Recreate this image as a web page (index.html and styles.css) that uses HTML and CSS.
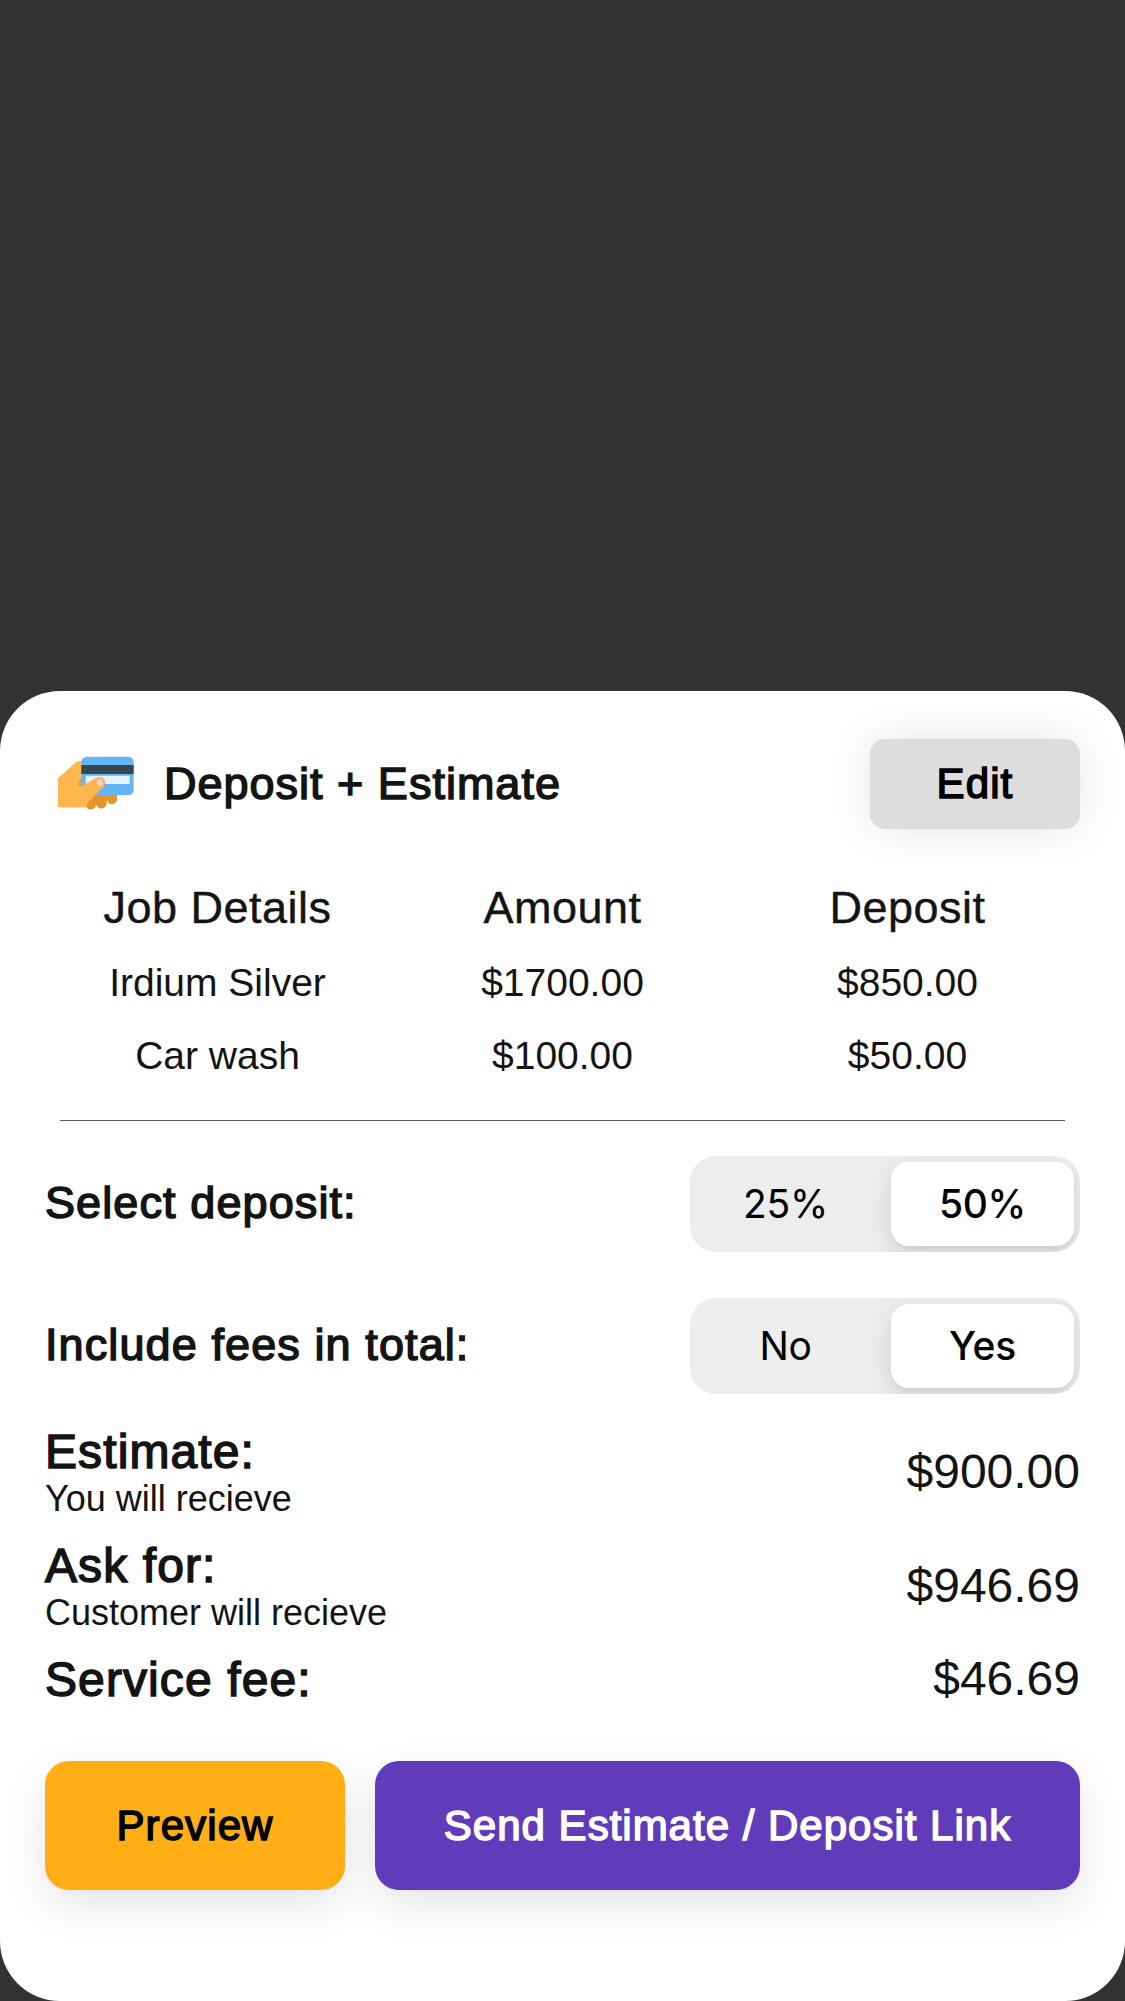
FILE: index.html
```html
<!DOCTYPE html>
<html lang="en">
<head>
<meta charset="utf-8">
<title>Deposit + Estimate</title>
<link rel="stylesheet" href="styles.css">
</head>
<body>
<main class="sheet">
  <header class="header">
    <svg class="icon" viewBox="54 48 228 162" aria-hidden="true">
      <path fill="#e8932b" d="M136 164H231V175A15 15 0 0 1 201 180L200 187A16 16 0 0 1 168 192A15 15 0 0 1 137 194Z"/>
      <path fill="#ffb74d" d="M54 115L108 67Q113 63 124 63H142V202H54Z"/>
      <path fill="#e8932b" d="M124 110V137H114Z"/>
      <rect x="124" y="50" width="157" height="115" rx="16" fill="#64b5f6"/>
      <path fill="#37474f" d="M124 75H281V102H124Z"/>
      <path fill="#e3f2fd" d="M137 107H269V132H137Z"/>
      <path fill="#ffb74d" d="M110 137H127L166 115Q184 106 193 118Q200 129 190 142L142 188Q128 202 108 202H80V150Z"/>
      <ellipse cx="180" cy="128" rx="9" ry="11" transform="rotate(-38 180 128)" fill="#ffcdd2"/>
    </svg>
    <h1 class="title">Deposit + Estimate</h1>
    <button class="button button-edit">Edit</button>
  </header>

  <section class="jobs">
    <div class="jobs-row jobs-head"><span>Job Details</span><span>Amount</span><span>Deposit</span></div>
    <div class="jobs-row"><span>Irdium Silver</span><span>$1700.00</span><span>$850.00</span></div>
    <div class="jobs-row"><span>Car wash</span><span>$100.00</span><span>$50.00</span></div>
  </section>
  <hr class="rule">

  <section class="options">
    <div class="option">
      <span class="option-label">Select deposit:</span>
      <div class="toggle"><span class="choice">25%</span><span class="choice choice-on">50%</span></div>
    </div>
    <div class="option">
      <span class="option-label">Include fees in total:</span>
      <div class="toggle"><span class="choice">No</span><span class="choice choice-on">Yes</span></div>
    </div>
  </section>

  <section class="totals">
    <div class="total">
      <div><div class="total-label">Estimate:</div><div class="total-note">You will recieve</div></div>
      <span class="total-value">$900.00</span>
    </div>
    <div class="total">
      <div><div class="total-label">Ask for:</div><div class="total-note">Customer will recieve</div></div>
      <span class="total-value">$946.69</span>
    </div>
    <div class="total">
      <div class="total-label">Service fee:</div>
      <span class="total-value">$46.69</span>
    </div>
  </section>

  <footer class="actions">
    <button class="button button-preview">Preview</button>
    <button class="button button-send">Send Estimate / Deposit Link</button>
  </footer>
</main>
</body>
</html>
```
FILE: styles.css
```css
* { box-sizing: border-box; }

body {
  margin: 0;
  min-height: 2001px;
  display: flex;
  flex-direction: column;
  justify-content: flex-end;
  background: #323232;
  color: #141414;
  font-family: "Liberation Sans", Arial, sans-serif;
}

.sheet {
  height: 1310px;
  padding: 48px 45px 0;
  overflow: hidden;
  border-radius: 60px;
  background: #fff;
}

/* Semi-bold: the regular cut thickened by a thin outline */
.title,
.button,
.option-label,
.total-label {
  font-weight: 400;
  letter-spacing: 1.1px;
  -webkit-text-stroke: 1.5px currentColor;
}

.header {
  display: flex;
  align-items: center;
  height: 90px;
  padding-left: 13px;
}
.icon {
  width: 76px;
  height: 54px;
  margin-bottom: 2px;
}
.title {
  flex: 1;
  margin: 0 0 0 30px;
  font-size: 45px;
  line-height: 60px;
  letter-spacing: 1px;
}

.button {
  border: 0;
  padding: 0;
  font-family: "Liberation Sans", Arial, sans-serif;
  font-size: 42px;
  line-height: 1;
  white-space: nowrap;
}
.button-edit {
  width: 210px;
  height: 90px;
  border-radius: 15px;
  background: #ddd;
  color: #000;
  box-shadow: 0 0 45px rgba(0, 0, 0, 0.11);
}

.jobs { margin-top: 49px; }
.jobs-row {
  display: grid;
  grid-template-columns: repeat(3, 1fr);
  text-align: center;
  font-size: 39px;
  line-height: 73px;
}
.jobs-head {
  margin-bottom: 8px;
  font-size: 45px;
  line-height: 60px;
  letter-spacing: 0.5px;
  -webkit-text-stroke: 0.4px currentColor;
}
.rule {
  height: 1px;
  margin: 28px 15px 35px;
  border: 0;
  background: #555;
}

.options { display: grid; gap: 46px; }
.option {
  display: flex;
  align-items: center;
  justify-content: space-between;
}
.option-label {
  padding-bottom: 3px;
  font-size: 45px;
}
.toggle {
  display: grid;
  grid-template-columns: 179px 183px;
  column-gap: 16px;
  width: 390px;
  height: 96px;
  padding: 6px;
  overflow: hidden;
  border-radius: 26px;
  background: #ededed;
  color: #000;
  font: 39px/84px Inter, sans-serif;
  letter-spacing: -0.3px;
  text-align: center;
}
.choice-on {
  border-radius: 18px;
  background: #fff;
  font-weight: 500;
  box-shadow: 0 9px 24px rgba(0, 0, 0, 0.12), 0 3px 3px rgba(0, 0, 0, 0.04);
}

.totals {
  display: grid;
  gap: 18px;
  margin-top: 30px;
}
.total {
  display: flex;
  align-items: center;
  justify-content: space-between;
}
.total-label {
  padding-top: 1px;
  font-size: 48px;
  line-height: 53px;
}
.total-note { font-size: 36px; line-height: 42px; }
.total-value { font-size: 48px; line-height: 54px; }

.actions {
  display: flex;
  gap: 30px;
  margin-top: 55px;
}
.actions .button {
  height: 129px;
  border-radius: 24px;
  box-shadow: 0 15px 45px rgba(0, 0, 0, 0.11);
}
.actions .button-preview {
  width: 300px;
  background: #ffae16;
  color: #000;
}
.actions .button-send {
  flex: 1;
  background: #613cba;
  color: #fff;
  letter-spacing: 1px;
}
```
